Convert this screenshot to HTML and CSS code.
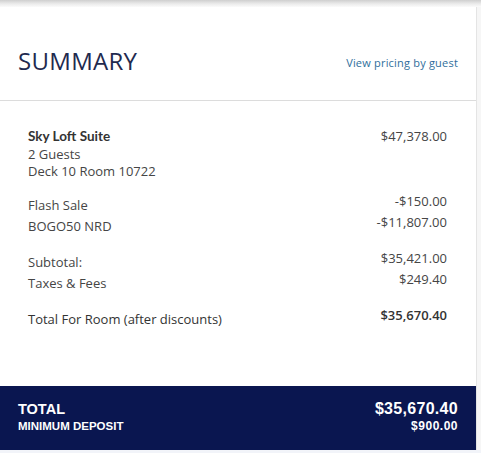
FILE: index.html
```html
<!DOCTYPE html>
<html>
<head>
<meta charset="utf-8">
<link rel="stylesheet" href="styles.css">
</head>
<body>
<div class="page">
  <div class="topshade"></div>
  <div class="card">
    <div class="header">
      <h1 class="title">SUMMARY</h1>
      <a class="link">View pricing by guest</a>
    </div>
    <div class="content">
      <div class="group first">
        <div class="labels">
          <div class="strong">Sky Loft Suite</div>
          <div>2 Guests</div>
          <div>Deck 10 Room 10722</div>
        </div>
        <div class="amounts">
          <div>$47,378.00</div>
        </div>
      </div>
      <div class="group">
        <div class="labels">
          <div>Flash Sale</div>
          <div>BOGO50 NRD</div>
        </div>
        <div class="amounts shifted">
          <div>-$150.00</div>
          <div>-$11,807.00</div>
        </div>
      </div>
      <div class="group">
        <div class="labels">
          <div>Subtotal:</div>
          <div>Taxes &amp; Fees</div>
        </div>
        <div class="amounts shifted">
          <div>$35,421.00</div>
          <div>$249.40</div>
        </div>
      </div>
      <div class="group">
        <div class="labels">
          <div class="medium">Total For Room (after discounts)</div>
        </div>
        <div class="amounts shifted">
          <div class="semibold">$35,670.40</div>
        </div>
      </div>
    </div>
    <div class="totalbar">
      <div class="trow first-row">
        <span class="tlabel">TOTAL</span>
        <span class="tvalue">$35,670.40</span>
      </div>
      <div class="trow">
        <span class="dlabel">MINIMUM DEPOSIT</span>
        <span class="dvalue">$900.00</span>
      </div>
    </div>
  </div>
</div>
</body>
</html>
```

FILE: styles.css
```css
html, body {
  margin: 0;
  padding: 0;
}
body {
  background: #f2f4f9;
  font-family: "Open Sans", "Liberation Sans", sans-serif;
  width: 481px;
  height: 453px;
  overflow: hidden;
}
.page {
  width: 481px;
  background: linear-gradient(to right, #ffffff 0, #ffffff 476px, #e4e4e4 476px, #e4e4e4 477px, #f6f6f6 477px);
}
.topshade {
  height: 7px;
  background: linear-gradient(to bottom, #cfcfcf, #ebebeb 55%, #fbfbfb);
}
.card {
  width: 476px;
  background: #ffffff;
}
.header {
  display: flex;
  justify-content: space-between;
  align-items: center;
  padding: 38px 18px 23px 18px;
  border-bottom: 1px solid #dcdcdc;
}
.title {
  margin: 0;
  font-size: 24px;
  line-height: 32px;
  font-weight: 400;
  color: #1f2a4f;
  letter-spacing: 0.3px;
}
.link {
  font-size: 11px;
  line-height: 15px;
  padding-top: 3px;
  color: #2f6e9c;
  letter-spacing: 0.2px;
}
.content {
  padding: 27px 29px 56px 28px;
  font-size: 13px;
  color: #454545;
}
.group {
  display: flex;
  justify-content: space-between;
  align-items: flex-start;
  line-height: 21px;
  margin-top: 15px;
}
.group.first {
  line-height: 17.5px;
  margin-top: 0;
  margin-bottom: -1px;
}
.amounts {
  text-align: right;
}
.amounts.shifted {
  margin-top: -4px;
}
.strong {
  font-family: Lato, "Open Sans", sans-serif;
  font-weight: 700;
  font-size: 13.5px;
  color: #333333;
}
.medium {
  color: #333333;
  font-weight: 500;
}
.semibold {
  color: #333333;
  font-weight: 600;
}
.totalbar {
  background: #0a1650;
  color: #ffffff;
  padding: 13px 18px 17px 18px;
  font-family: "Liberation Sans", Arial, sans-serif;
  font-weight: 700;
}
.trow {
  display: flex;
  justify-content: space-between;
  align-items: baseline;
  line-height: 14px;
}
.trow.first-row {
  line-height: 19px;
}
.tlabel {
  font-size: 14.5px;
}
.tvalue {
  font-size: 16px;
  letter-spacing: 0.3px;
}
.dlabel {
  font-size: 11.5px;
}
.dvalue {
  font-size: 12px;
  letter-spacing: 0.5px;
}
```
